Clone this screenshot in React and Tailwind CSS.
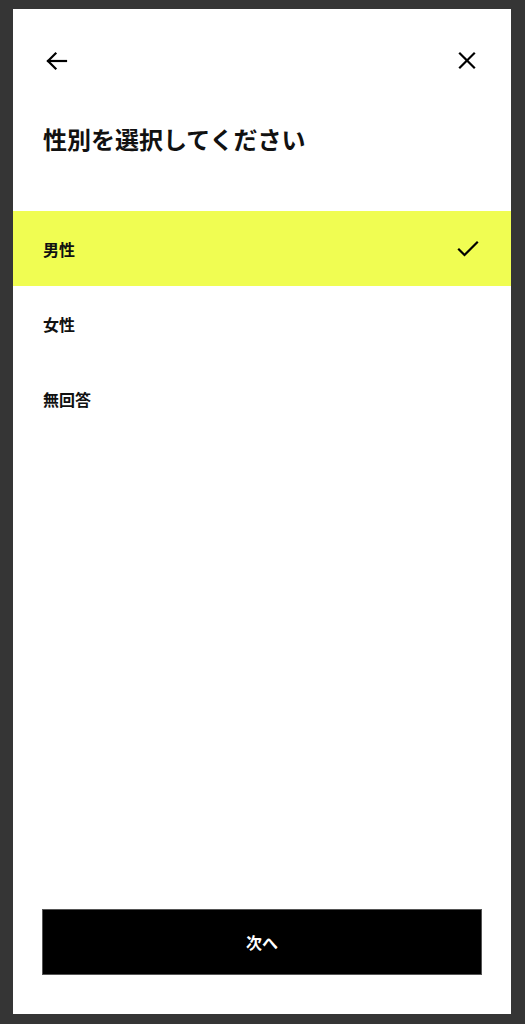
import React, { useState } from "react";

const options = ["男性", "女性", "無回答"];

function BackIcon() {
  return (
    <svg width="24" height="24" viewBox="0 0 24 24" fill="none" stroke="currentColor" strokeWidth="2.2" strokeLinecap="square">
      <path d="M21 12H3" />
      <path d="M10.5 4.5L3 12L10.5 19.5" strokeLinejoin="miter" />
    </svg>
  );
}

function CloseIcon() {
  return (
    <svg width="24" height="24" viewBox="0 0 24 24" fill="none" stroke="currentColor" strokeWidth="2.2" strokeLinecap="square">
      <path d="M5 4.5L19 18.5" />
      <path d="M19 4.5L5 18.5" />
    </svg>
  );
}

function CheckIcon() {
  return (
    <svg width="24" height="24" viewBox="0 0 24 24" fill="none" stroke="currentColor" strokeWidth="2.2" strokeLinecap="square">
      <path d="M3 12.5L8.5 18L21 5.5" />
    </svg>
  );
}

export default function App() {
  const [selected, setSelected] = useState("男性");

  return (
    <div
      className="min-h-[1024px] w-[525px] bg-[#353535] pt-[9px] pl-[13px]"
      style={{ fontFamily: '"Noto Sans CJK JP", "Noto Sans", sans-serif' }}
    >
      <div className="w-[498px] h-[1005px] bg-white flex flex-col">
        {/* header */}
        <div className="flex justify-between items-center px-[32px] pt-[40px] text-black">
          <button className="w-6 h-6 flex items-center justify-center">
            <BackIcon />
          </button>
          <button className="w-6 h-6 flex items-center justify-center">
            <CloseIcon />
          </button>
        </div>

        <h1 className="px-[30px] mt-[50px] text-[24px] leading-[32px] font-semibold text-[#111]">
          性別を選択してください
        </h1>

        <ul className="mt-[56px]">
          {options.map((opt) => (
            <li
              key={opt}
              onClick={() => setSelected(opt)}
              className={
                "h-[75px] px-[30px] flex items-center justify-between cursor-pointer " +
                (selected === opt ? "bg-[#f0fd52]" : "bg-white")
              }
            >
              <span className="text-[16px] font-semibold text-[#111]">{opt}</span>
              {selected === opt && (
                <span className="mr-[1px] text-black">
                  <CheckIcon />
                </span>
              )}
            </li>
          ))}
        </ul>

        <div className="mt-auto px-[29px] pb-[39px]">
          <button className="w-full h-[66px] bg-black border border-[#555] text-white text-[16px] font-semibold">
            次へ
          </button>
        </div>
      </div>
    </div>
  );
}
